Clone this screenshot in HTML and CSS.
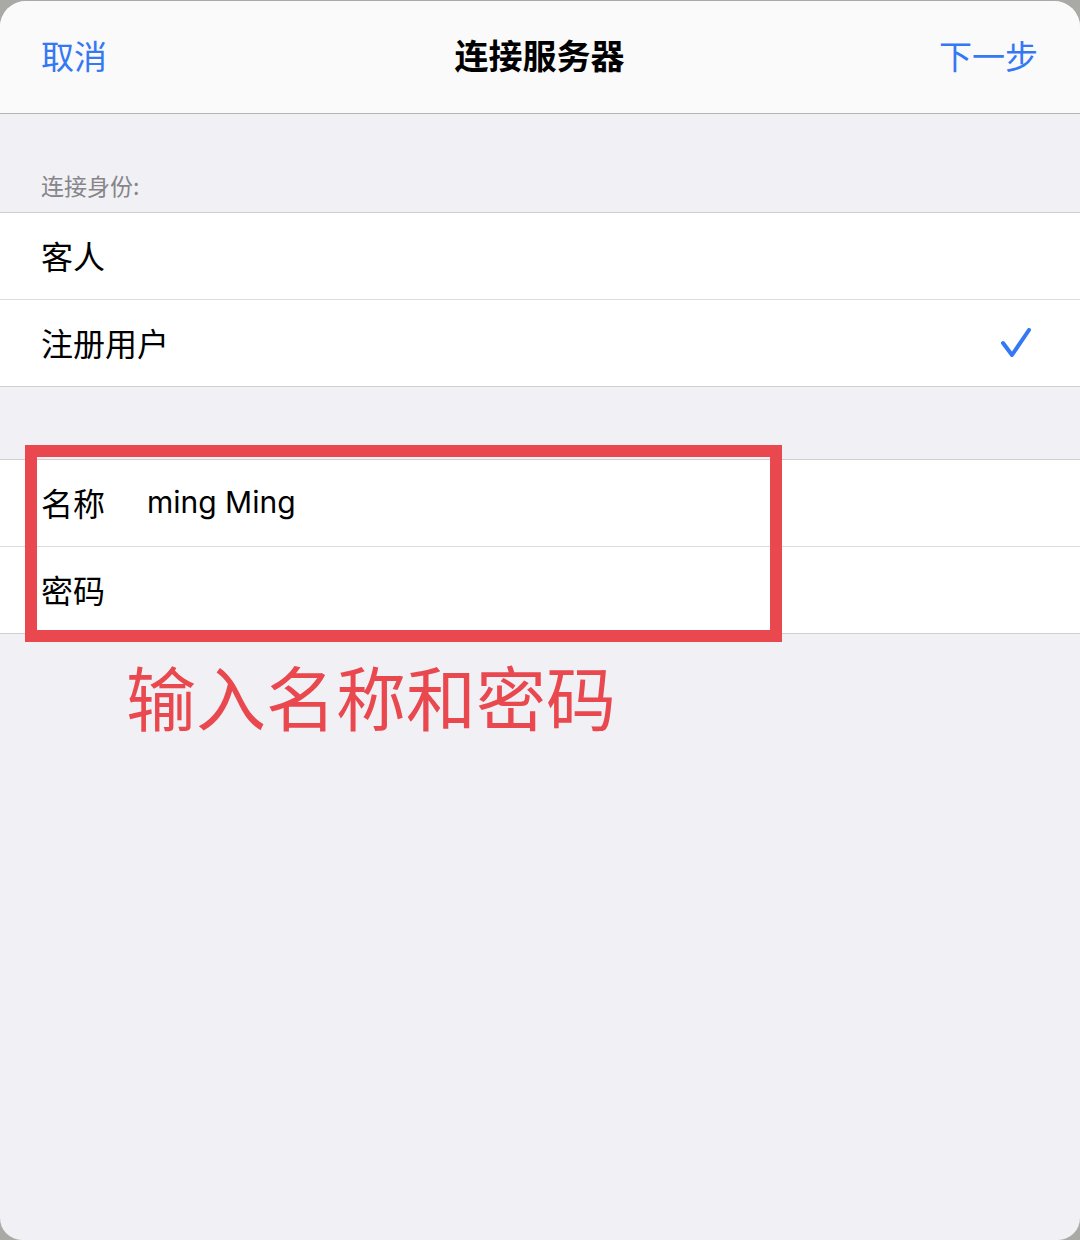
FILE: index.html
```html
<!DOCTYPE html>
<html lang="zh-CN">
<head>
<meta charset="utf-8">
<title>连接服务器</title>
<link rel="stylesheet" href="styles.css">
</head>
<body>
<div class="sheet">
  <header class="navbar">
    <span class="nav-btn nav-left">取消</span>
    <span class="nav-title">连接服务器</span>
    <span class="nav-btn nav-right">下一步</span>
  </header>
  <div class="section-header">连接身份:</div>
  <div class="group">
    <div class="row"><span class="label">客人</span></div>
    <div class="row">
      <span class="label">注册用户</span>
      <svg class="check" width="32" height="32" viewBox="0 0 32 32"><path d="M3 15 L12 27 L29 2" fill="none" stroke="#3478f6" stroke-width="4" stroke-linecap="round" stroke-linejoin="round"/></svg>
    </div>
  </div>
  <div class="group group-gap">
    <div class="row"><span class="label field-label">名称</span><span class="value">ming Ming</span></div>
    <div class="row"><span class="label field-label">密码</span></div>
    <div class="highlight"></div>
  </div>
  <div class="annotation">输入名称和密码</div>
</div>
</body>
</html>
```
FILE: styles.css
```css
* { box-sizing: border-box; }
html, body {
  margin: 0;
  padding: 0;
}
body {
  width: 1080px;
  height: 1240px;
  background: #a9aaa6;
  padding-top: 1px;
  font-family: "Noto Sans CJK SC", "Noto Sans", sans-serif;
  overflow: hidden;
}
.sheet {
  width: 1080px;
  height: 1239px;
  background: #f1f0f5;
  border-radius: 26px 26px 22px 22px;
  overflow: hidden;
  position: relative;
}
.navbar {
  height: 113px;
  background: #fafafa;
  border-bottom: 1px solid #b4b4b4;
  display: grid;
  grid-template-columns: 1fr auto 1fr;
  align-items: center;
  padding: 0 42px 4px 41px;
}
.nav-btn {
  color: #3478f6;
  font-size: 33px;
  line-height: 40px;
}
.nav-right { justify-self: end; }
.nav-title {
  font-size: 34px;
  font-weight: 700;
  color: #000;
  line-height: 40px;
}
.section-header {
  height: 98px;
  display: flex;
  align-items: flex-end;
  padding: 0 0 14px 41px;
  font-size: 23px;
  line-height: 26px;
  color: #85858a;
}
.group {
  background: #fff;
  border-top: 1px solid #cfcfd3;
  border-bottom: 1px solid #cfcfd3;
  position: relative;
}
.group-gap { margin-top: 72px; }
.row {
  height: 86px;
  display: flex;
  align-items: center;
  padding: 0 48px 2px 41px;
}
.row + .row { border-top: 1px solid #dcdcdf; height: 87px; }
.label {
  font-size: 32px;
  color: #000;
  line-height: 40px;
}
.field-label { width: 106px; }
.value {
  font-family: "Inter", "Noto Sans", sans-serif;
  font-size: 30px;
  color: #000;
  line-height: 40px;
}
.check { margin-left: auto; margin-top: 4px; }
.highlight {
  position: absolute;
  left: 25px;
  top: -15px;
  width: 757px;
  height: 197px;
  border: 12px solid #e9484e;
}
.annotation {
  margin: 22px 0 0 126px;
  font-size: 70px;
  line-height: 80px;
  color: #e9484e;
}
```
